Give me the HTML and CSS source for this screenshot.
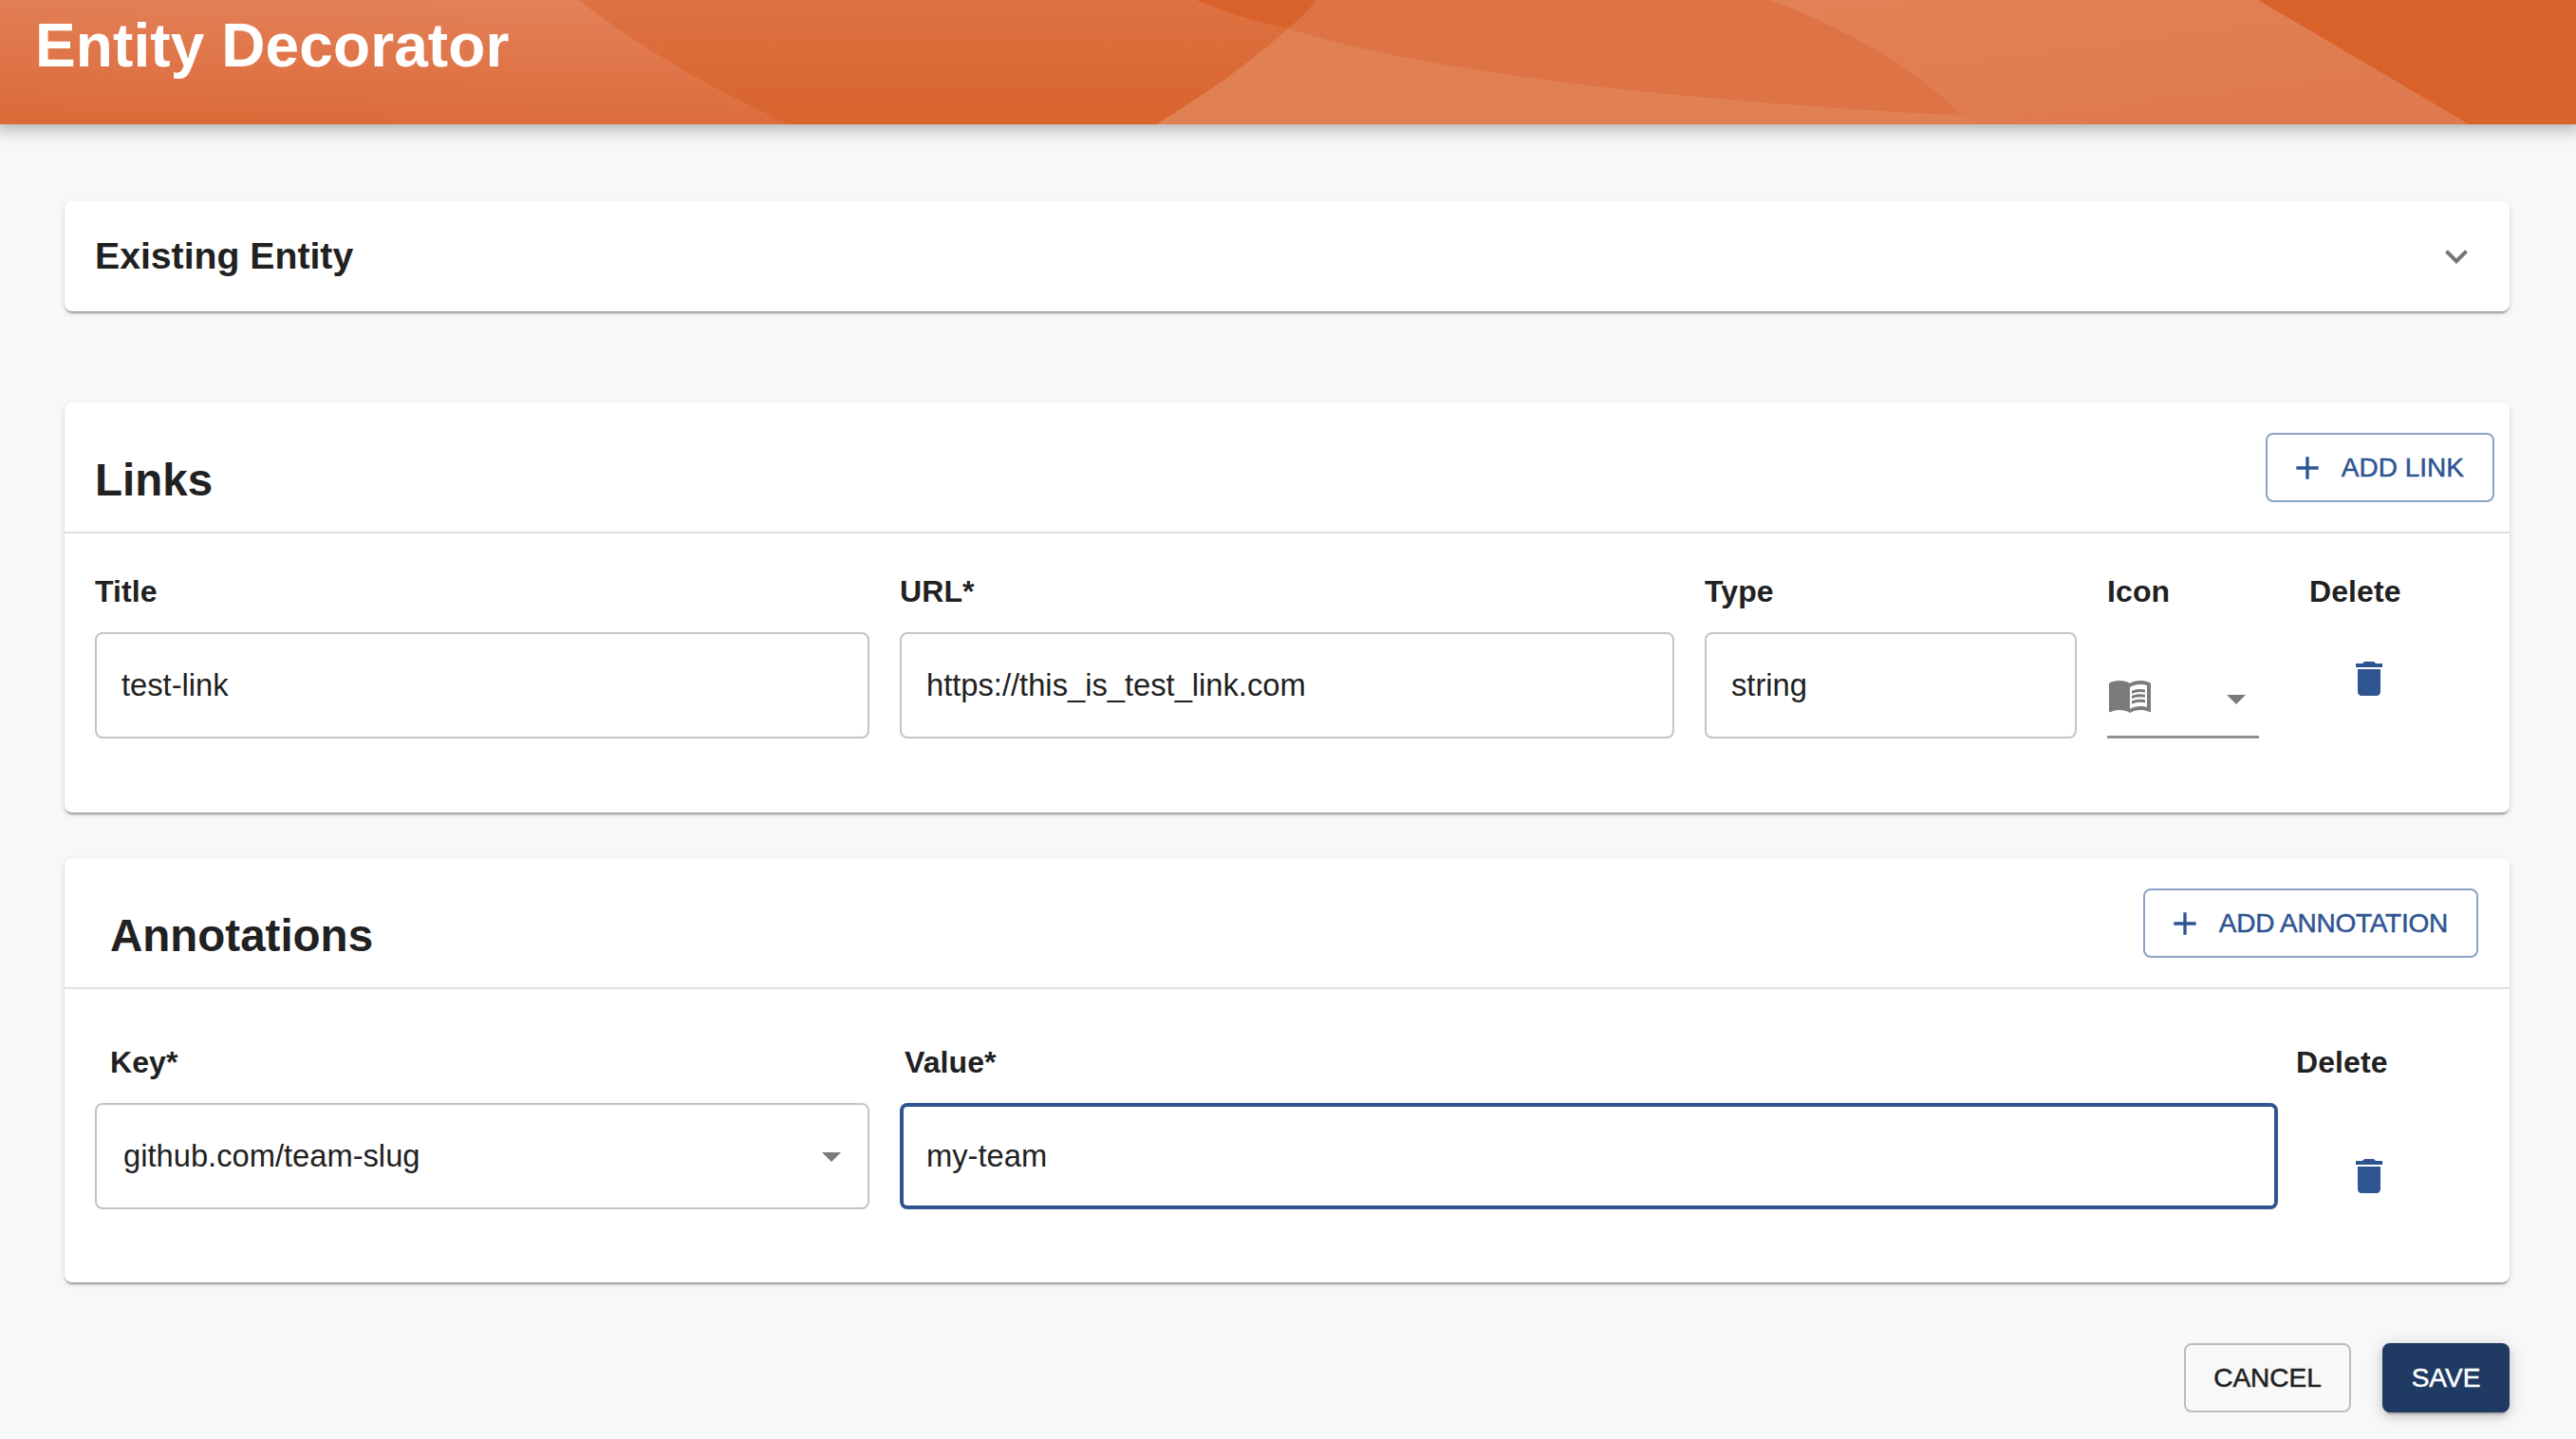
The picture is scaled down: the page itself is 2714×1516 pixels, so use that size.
FILE: index.html
```html
<!DOCTYPE html>
<html lang="en">
<head>
<meta charset="utf-8">
<title>Entity Decorator</title>
<link rel="stylesheet" href="styles.css">
</head>
<body>
<header class="banner">
  <svg class="banner-art" viewBox="0 0 2714 131" preserveAspectRatio="none" aria-hidden="true">
    <defs>
      <linearGradient id="gLeft" x1="0.7" y1="0" x2="0.55" y2="1"><stop offset="0" stop-color="#e38159"/><stop offset="1" stop-color="#dc6b3a"/></linearGradient>
      <linearGradient id="gMid" x1="0.5" y1="0" x2="0.5" y2="1"><stop offset="0" stop-color="#de7142"/><stop offset="1" stop-color="#d9642e"/></linearGradient>
      <linearGradient id="gRight" x1="0.2" y1="0" x2="0.9" y2="1"><stop offset="0" stop-color="#e28155"/><stop offset="1" stop-color="#de794c"/></linearGradient>
    </defs>
    <rect width="2714" height="131" fill="#d9622b"/>
    <path d="M0 0H610Q700 70 831 131H0Z" fill="url(#gLeft)"/>
    <path d="M610 0H1260Q1305 19 1357 30Q1295 85 1218 131H831Q700 70 610 0Z" fill="url(#gMid)"/>
    <path d="M1387 0Q1375 16 1357 30C1500 75 1750 105 2076 122Q2000 50 1863 0Z" fill="#de7445"/>
    <path d="M1357 30Q1295 85 1218 131H2240Q2160 126 2076 122C1750 105 1500 75 1357 30Z" fill="#e18052"/>
    <path d="M1863 0H2379Q2490 65 2601 131H2076Q2000 50 1863 0Z" fill="url(#gRight)"/>
  </svg>
  <h1 class="banner-title">Entity Decorator</h1>
</header>
<main class="page">
  <section class="card accordion">
    <h2 class="accordion-title">Existing Entity</h2>
    <svg class="icon icon-muted" viewBox="0 0 24 24" aria-hidden="true"><path d="M16.59 8.59 12 13.17 7.41 8.59 6 10l6 6 6-6z"/></svg>
  </section>

  <section class="card card-links">
    <div class="card-head head-links">
      <h2 class="card-title">Links</h2>
      <button class="btn btn-outline" type="button">
        <svg class="icon-plus" viewBox="0 0 24 24" aria-hidden="true"><path d="M19 13h-6v6h-2v-6H5v-2h6V5h2v6h6v2z"/></svg>
        <span>ADD LINK</span>
      </button>
    </div>
    <div class="rows rows-links">
      <div class="field"><div class="label">Title</div><div class="input">test-link</div></div>
      <div class="field"><div class="label">URL*</div><div class="input">https://this_is_test_link.com</div></div>
      <div class="field"><div class="label">Type</div><div class="input">string</div></div>
      <div class="field"><div class="label">Icon</div>
        <div class="icon-select">
          <svg class="icon icon-grey" viewBox="0 0 24 24" aria-hidden="true"><path d="M21 5c-1.11-.35-2.33-.5-3.5-.5-1.95 0-4.05.4-5.5 1.5-1.45-1.1-3.55-1.5-5.5-1.5S2.45 4.9 1 6v14.65c0 .25.25.5.5.5.1 0 .15-.05.25-.05C3.1 20.45 5.05 20 6.5 20c1.95 0 4.05.4 5.5 1.5 1.35-.85 3.8-1.5 5.5-1.5 1.65 0 3.35.3 4.75 1.05.1.05.15.05.25.05.25 0 .5-.25.5-.5V6c-.6-.45-1.25-.75-2-1zm0 13.5c-1.1-.35-2.3-.5-3.5-.5-1.7 0-4.15.65-5.5 1.5V8c1.35-.85 3.8-1.5 5.5-1.5 1.2 0 2.4.15 3.5.5v11.5z"/><path d="M17.5 10.5c.88 0 1.73.09 2.5.26V9.24c-.79-.15-1.64-.24-2.5-.24-1.7 0-3.24.29-4.5.83v1.66c1.13-.64 2.7-.99 4.5-.99zM13 12.49v1.66c1.13-.64 2.7-.99 4.5-.99.88 0 1.73.09 2.5.26V11.9c-.79-.15-1.64-.24-2.5-.24-1.7 0-3.24.3-4.5.83zM17.5 14.33c-1.7 0-3.24.29-4.5.83v1.66c1.13-.64 2.7-.99 4.5-.99.88 0 1.73.09 2.5.26v-1.52c-.79-.16-1.64-.24-2.5-.24z"/></svg>
          <svg class="icon icon-grey arrow-low" viewBox="0 0 24 24" aria-hidden="true"><path d="M7 10l5 5 5-5z"/></svg>
        </div>
      </div>
      <div class="field field-delete"><div class="label">Delete</div>
        <svg class="icon icon-blue trash-links" viewBox="0 0 24 24" aria-hidden="true"><path d="M6 19c0 1.1.9 2 2 2h8c1.1 0 2-.9 2-2V7H6v12zM19 4h-3.5l-1-1h-5l-1 1H5v2h14V4z"/></svg>
      </div>
    </div>
  </section>

  <section class="card card-annotations">
    <div class="card-head head-annotations">
      <h2 class="card-title">Annotations</h2>
      <button class="btn btn-outline btn-tight" type="button">
        <svg class="icon-plus" viewBox="0 0 24 24" aria-hidden="true"><path d="M19 13h-6v6h-2v-6H5v-2h6V5h2v6h6v2z"/></svg>
        <span>ADD ANNOTATION</span>
      </button>
    </div>
    <div class="rows rows-annotations">
      <div class="field"><div class="label label-key">Key*</div>
        <div class="input input-select"><span>github.com/team-slug</span>
          <svg class="icon icon-grey" viewBox="0 0 24 24" aria-hidden="true"><path d="M7 10l5 5 5-5z"/></svg>
        </div>
      </div>
      <div class="field"><div class="label label-value">Value*</div><div class="input input-focus">my-team</div></div>
      <div class="field field-delete2"><div class="label">Delete</div>
        <svg class="icon icon-blue trash-annotations" viewBox="0 0 24 24" aria-hidden="true"><path d="M6 19c0 1.1.9 2 2 2h8c1.1 0 2-.9 2-2V7H6v12zM19 4h-3.5l-1-1h-5l-1 1H5v2h14V4z"/></svg>
      </div>
    </div>
  </section>

  <div class="actions">
    <button class="btn btn-cancel" type="button">CANCEL</button>
    <button class="btn btn-save" type="button">SAVE</button>
  </div>
</main>
</body>
</html>
```
FILE: styles.css
```css
* { box-sizing: border-box; }
html, body { margin: 0; padding: 0; }
body {
  width: 2714px;
  height: 1516px;
  overflow: hidden;
  background: #f8f8f8;
  color: #212121;
  font-family: "Liberation Sans", Arial, sans-serif;
}
.banner {
  position: relative;
  height: 131px;
  padding-left: 37px;
  background: #d9622b;
  box-shadow: 0 0 16px 6px rgba(20, 20, 20, 0.3);
}
.banner-art { position: absolute; inset: 0; width: 100%; height: 100%; display: block; }
.banner-title {
  position: relative;
  margin: 0;
  font-size: 64px;
  line-height: 96px;
  font-weight: 700;
  letter-spacing: 0.1px;
  color: #fff;
}
.page { padding: 81px 70px 0 68px; }
.card {
  background: #fff;
  border-radius: 8px;
  box-shadow: 0 4px 2px -2px rgba(0,0,0,.2), 0 2px 2px 0 rgba(0,0,0,.14), 0 2px 6px 0 rgba(0,0,0,.12);
}
.accordion {
  height: 116px;
  padding: 0 32px;
  display: flex;
  align-items: center;
  justify-content: space-between;
}
.accordion-title { margin: 0; font-size: 39.2px; line-height: 56px; font-weight: 700; }
.icon { width: 48px; height: 48px; display: block; flex: none; }
.icon-muted { fill: #757575; }
.icon-grey { fill: #7b7b7b; }
.icon-blue { fill: #2e5592; }
.card-links { margin-top: 96px; height: 432px; }
.card-annotations { margin-top: 48px; height: 447px; }
.card-head {
  display: flex;
  align-items: flex-start;
  justify-content: space-between;
  border-bottom: 2px solid #e0e0e0;
}
.head-links { height: 138px; padding: 32px 16px 0 32px; }
.head-annotations { height: 138px; padding: 32px 33px 0 48px; }
.card-title { margin: 0; font-weight: 700; font-size: 47.5px; line-height: 56px; padding-top: 22px; }
.btn {
  font-family: "Liberation Sans", Arial, sans-serif;
  font-weight: 400;
  font-size: 28px;
  -webkit-text-stroke: 0.5px currentColor;
  height: 73px;
  border-radius: 8px;
  cursor: pointer;
  display: inline-flex;
  align-items: center;
  justify-content: center;
}
.btn-outline {
  background: transparent;
  border: 2px solid #8ba2c6;
  color: #2e5592;
  padding: 0 30px 0 22px;
  gap: 16px;
}
.btn-tight { letter-spacing: -0.25px; }
.icon-plus { width: 40px; height: 40px; fill: #2e5592; flex: none; }
.rows { display: grid; column-gap: 32px; }
.rows-links {
  padding: 41px 0 0 32px;
  grid-template-columns: 816px 816px 392px 160px auto;
}
.rows-annotations {
  padding: 57px 0 0 32px;
  grid-template-columns: 816px 1452px auto;
}
.label {
  font-size: 32px;
  line-height: 40px;
  font-weight: 700;
  letter-spacing: 0.1px;
  margin-bottom: 23px;
}
.label-key { padding-left: 16px; }
.label-value { padding-left: 5px; }
.input {
  height: 112px;
  border: 2px solid #c4c4c4;
  border-radius: 8px;
  padding: 0 26px;
  display: flex;
  align-items: center;
  font-size: 32.7px;
  color: #212121;
}
.input-select { padding: 0 14px 0 28px; justify-content: space-between; }
.input-focus { border: 4px solid #2e5592; padding: 0 24px; }
.icon-select {
  height: 112px;
  padding-top: 42px;
  border-bottom: 3px solid #8f8f8f;
  display: flex;
  justify-content: space-between;
  align-items: flex-start;
}
.arrow-low { margin-top: 4px; }
.field-delete { margin-left: 21px; }
.trash-links { margin: 48px 0 0 39px; }
.field-delete2 { margin-left: -13px; }
.trash-annotations { margin: 76px 0 0 53px; }
.actions { margin-top: 64px; display: flex; justify-content: flex-end; gap: 33px; }
.btn-cancel {
  width: 176px;
  background: transparent;
  border: 2px solid #bdbdbd;
  color: #212121;
}
.btn-save {
  width: 134px;
  background: #1f3a63;
  border: 0;
  color: #fff;
  box-shadow: 0 6px 2px -4px rgba(0,0,0,.2), 0 4px 10px 0 rgba(0,0,0,.14), 0 2px 20px 0 rgba(0,0,0,.12);
}
```
